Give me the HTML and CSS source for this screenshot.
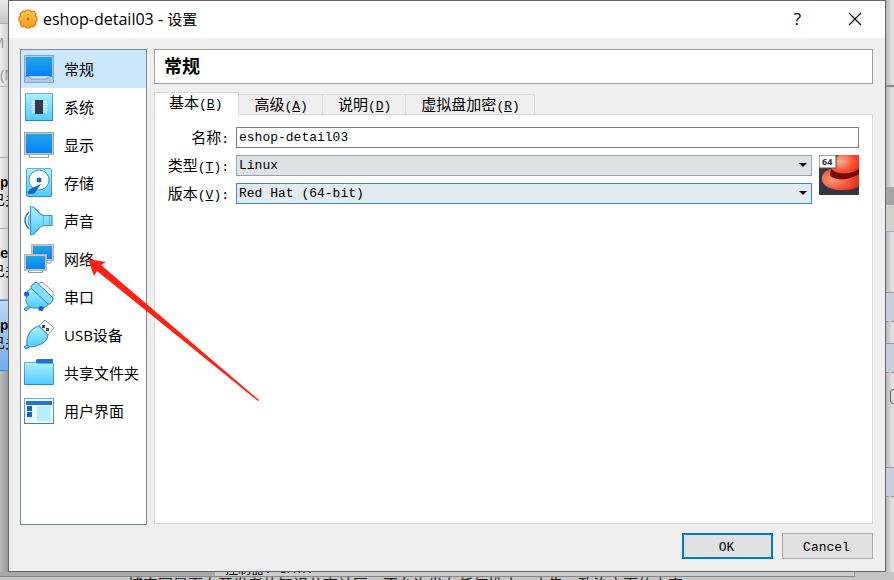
FILE: index.html
```html
<!DOCTYPE html>
<html lang="zh-CN">
<head>
<meta charset="utf-8">
<title>eshop-detail03 - 设置</title>
<link rel="stylesheet" href="styles.css">
</head>
<body>
<svg width="0" height="0" class="defs" aria-hidden="true">
  <defs>
    <linearGradient id="screen" x1="0" y1="0" x2="0" y2="1"><stop offset="0" stop-color="#22a5e4"/><stop offset="1" stop-color="#0580fb"/></linearGradient>
    <linearGradient id="cyan" x1="0" y1="0" x2="0" y2="1"><stop offset="0" stop-color="#aef0ff"/><stop offset="1" stop-color="#50ccff"/></linearGradient>
    <linearGradient id="edge" x1="0" y1="0" x2="0" y2="1"><stop offset="0" stop-color="#5cb2e3"/><stop offset="1" stop-color="#2b86d8"/></linearGradient>
    <linearGradient id="gear" x1="0" y1="0" x2="0" y2="1"><stop offset="0" stop-color="#ffd54a"/><stop offset="1" stop-color="#fb9d20"/></linearGradient>
    <radialGradient id="crown" cx=".35" cy=".3" r=".75"><stop offset="0" stop-color="#ffb594"/><stop offset=".55" stop-color="#fb5a38"/><stop offset="1" stop-color="#ee2a14"/></radialGradient>
    <radialGradient id="brim" cx=".3" cy=".5" r=".7"><stop offset="0" stop-color="#ff9c78"/><stop offset="1" stop-color="#e92d16"/></radialGradient>
  </defs>
</svg>
<div class="desktop">
  <div class="left-strip">
    <div class="toolbar-a"></div>
    <div class="toolbar-b"><span>M</span><span>(M</span></div>
    <div class="vm-gap"></div>
    <div class="vm"><b>p</b><span>已关</span></div>
    <div class="vm"><b>e</b><span>已关</span></div>
    <div class="vm vm-selected"><b>p</b><span>已关</span></div>
    <div class="vm-rest"></div>
  </div>

  <main class="dialog">
    <header class="titlebar">
      <svg class="gear" width="20" height="20" viewBox="0 0 20 20"><path d="M8 1h4l1 2 3-1 2 3-1 2 2 1v4l-2 1 1 2-3 3-2-1-1 2H8l-1-2-3 1-2-3 1-2-2-1V8l2-1-1-2 3-3 2 1z" fill="url(#gear)" stroke="#ee7414" stroke-width="1.200" stroke-linejoin="round"/><circle cx="10" cy="10" r="4.600" fill="none" stroke="#f5a52b"/><circle cx="10" cy="10" r="1.500" fill="#e05c10"/><path d="M10 5v2M10 13v2M5 10h2M13 10h2" stroke="#f5932b"/></svg>
      <h1>eshop-detail03 - <span>设置</span></h1>
      <button class="win-btn" type="button" aria-label="帮助">?</button>
      <button class="win-btn" type="button" aria-label="关闭"><svg width="14" height="14" viewBox="0 0 14 14"><path d="M1 1l12 12M13 1L1 13" stroke="#000" stroke-width="1.100"/></svg></button>
    </header>

    <div class="content">
      <nav class="sidebar">
        <a href="#" class="item active"><svg width="32" height="32" viewBox="0 0 32 32"><path d="M2.500 2.500h29v27h-29z" fill="#a9cbee" stroke="#7ea5ce"/><path d="M4 4h26v19H4z" fill="url(#screen)"/><path d="M3 23.500h4l2 2.500h16l2-2.500h4" fill="#cfe5fb" stroke="#6f9dc9"/></svg><span>常规</span></a>
        <a href="#" class="item"><svg width="32" height="32" viewBox="0 0 32 32"><rect x="3.500" y="2.500" width="27" height="27" fill="url(#cyan)" stroke="url(#edge)"/><path d="M10 11h15M9 13.500h17M10 16h15M9 18.500h17M10 21h15" stroke="#fff" stroke-width="1.200"/><path d="M13 9h8v14h-8z" fill="#343848"/></svg><span>系统</span></a>
        <a href="#" class="item"><svg width="32" height="32" viewBox="0 0 32 32"><path d="M7.500 25h19v3.500h-19z" fill="#fff" stroke="#999"/><rect x="2.500" y="3.500" width="29" height="22" fill="#c6c8c8" stroke="#a4a6a8"/><rect x="4" y="5" width="26" height="19" fill="url(#screen)"/></svg><span>显示</span></a>
        <a href="#" class="item"><svg width="32" height="32" viewBox="0 0 32 32"><rect x="4.500" y="1.500" width="25" height="28" rx="1.500" fill="url(#cyan)" stroke="url(#edge)"/><circle cx="17" cy="13" r="10" fill="#fff" stroke="#3a94da"/><circle cx="17" cy="13" r="2.500" fill="#1467ce"/><path d="M19 17L8 22q-3 3-2 5l4 0q3 0 4-3z" fill="#1467ce"/></svg><span>存储</span></a>
        <a href="#" class="item"><svg width="32" height="32" viewBox="0 0 32 32"><path d="M9 10C5 10 5 21 9 21z" fill="#8be4ff" stroke="#3c9de0"/><path d="M7 7Q-1 15 7 24" fill="none" stroke="#177ccc" stroke-width="1.400"/><path d="M8.500 2Q9 1 11 2C15 4 17 10 22 10.500h8v10h-8C17 21 15 27 11 29.500Q9 30.500 8.500 29z" fill="url(#cyan)" stroke="#3a94da" stroke-width="1.200"/><path d="M21.500 11v9M27.500 11v9" stroke="#55b6e5"/></svg><span>声音</span></a>
        <a href="#" class="item"><svg width="32" height="32" viewBox="0 0 32 32"><path d="M20 17h9v3h-9z" fill="#fff" stroke="#999"/><rect x="9.500" y="1.500" width="22" height="16" fill="#c6c8c8" stroke="#b4b6b8"/><rect x="11" y="3" width="19" height="13" fill="url(#screen)"/><path d="M6.500 27h14v2.500h-14z" fill="#fff" stroke="#999"/><rect x="2.500" y="11.500" width="22" height="16" fill="#c6c8c8" stroke="#b4b6b8"/><rect x="4" y="13" width="19" height="13" fill="url(#screen)"/></svg><span>网络</span></a>
        <a href="#" class="item"><svg width="32" height="32" viewBox="0 0 32 32"><path d="M16 4l2-2.500h3L31 11v5l-3 1z" fill="#fff" stroke="#999"/><path d="M7 24l-5 4 2 2 5-4" fill="#5fc9f5" stroke="#2a7ec6"/><path d="M8 8C4 10 5 14 4 19c0 4 3 8 8 8h6c4 0 7-1 9-5L12 7z" fill="url(#cyan)" stroke="#2b86d8"/><path d="M9 5l4-3.500h2L31 17v2l-3 4h-2L9 7z" fill="#84dfff" stroke="#2b86d8"/><circle cx="4.500" cy="13" r="2.600" fill="#1467ce"/><circle cx="19" cy="27.500" r="2.600" fill="#1467ce"/></svg><span>串口</span></a>
        <a href="#" class="item"><svg width="32" height="32" viewBox="0 0 32 32"><path d="M16 8l7-7 9 8-7 8z" fill="#fff" stroke="#999"/><path d="M20 6h3v3h-3zM24 9h3v3h-3z" fill="#444"/><path d="M6 25l-4 3 2 2 5-3" fill="#5fc9f5" stroke="#2a7ec6"/><path d="M5 26c-1-8 3-17 12-19l9 9c-1 8-11 12-19 12z" fill="url(#cyan)" stroke="#4394d8" stroke-width="1.200"/></svg><span>USB设备</span></a>
        <a href="#" class="item"><svg width="32" height="32" viewBox="0 0 32 32"><path d="M13 6l2-4h16v5H13z" fill="#266fd4"/><path d="M2.500 5.500h11l2 1h16v21h-29z" fill="url(#cyan)" stroke="url(#edge)"/></svg><span>共享文件夹</span></a>
        <a href="#" class="item"><svg width="32" height="32" viewBox="0 0 32 32"><rect x="2.500" y="3.500" width="29" height="25" fill="#f2fcff" stroke="url(#edge)"/><path d="M4 6h26v4H4z" fill="#266fd4"/><path d="M5 11h5v5H5zM5 17h5v5H5z" fill="#1467ce"/><rect x="15" y="11" width="14" height="15" fill="#b9ecfd"/></svg><span>用户界面</span></a>
      </nav>

      <section class="main">
        <h2>常规</h2>
        <div class="tabs" role="tablist">
          <button class="tab selected" type="button" role="tab">基本<span class="key">(<u>B</u>)</span></button>
          <button class="tab" type="button" role="tab">高级<span class="key">(<u>A</u>)</span></button>
          <button class="tab" type="button" role="tab">说明<span class="key">(<u>D</u>)</span></button>
          <button class="tab" type="button" role="tab">虚拟盘加密<span class="key">(<u>R</u>)</span></button>
        </div>
        <form class="pane">
          <label for="name">名称<span class="key">:</span></label>
          <input id="name" class="field name" type="text" value="eshop-detail03">
          <label for="type">类型<span class="key">(<u>T</u>):</span></label>
          <div class="select"><select id="type" class="field"><option>Linux</option></select></div>
          <svg class="os" width="40" height="40" viewBox="0 0 40 40"><rect width="40" height="40" rx="1" fill="#343743"/><path d="M12 14C6 15 2 20 3 25c1 7 12 11 23 10 7 0 11-2 14-4V14z" fill="url(#brim)"/><path d="M12 18C13 10 14 4 20 0h20v18q-16 6-28 0z" fill="url(#crown)"/><path d="M12 14c7 6 18 6 28 0v5c-10 7-25 7-29 1z" fill="#790801"/><rect width="17" height="13" fill="#fff" stroke="#555"/><text x="3" y="10" class="bits">64</text></svg>
          <label for="version">版本<span class="key">(<u>V</u>):</span></label>
          <div class="select"><select id="version" class="field focused"><option>Red Hat (64-bit)</option></select></div>
        </form>
      </section>
    </div>

    <footer class="actions">
      <button class="action default" type="button">OK</button>
      <button class="action" type="button">Cancel</button>
    </footer>
    <svg class="pointer" width="172" height="142" viewBox="0 0 172 142" aria-hidden="true"><path d="M0 0l18 3-5 3 158 135-1 1L9 12l-3 5z" fill="#ff2113"/></svg>
  </main>

  <div class="right-strip">
    <div class="r-top"></div><div class="r-mid"></div><div class="r-scroll"></div><div class="r-bar"></div>
    <div class="r-space"></div><div class="r-cell"></div><div class="r-gap"></div><div class="r-cell"></div>
    <div class="r-check"><i></i></div><div class="r-cell"></div><div class="r-rest"></div>
  </div>
  <div class="bottom-strip">
    <div class="vm-window"><span>控制器: SATA</span></div>
    <div class="page-text"><span>博客园是面向开发者的知识分享社区，不允许发布任何推广、广告、政治方面的内容</span></div>
  </div>
</div>
</body>
</html>
```
FILE: styles.css
```css
* { box-sizing: border-box; }
body { margin: 0; color: #000; font-family: "Open Sans", "Noto Sans CJK SC", sans-serif; font-size: 15px; }
.defs { display: block; }
.desktop {
  display: grid;
  grid-template-columns: 8px minmax(0, 1fr) 8px;
  grid-template-rows: minmax(0, 1fr) 8px;
  height: 100vh;
  overflow: hidden;
  background: #ccc;
}

/* dialog */
.dialog { position: relative; display: flex; flex-direction: column; background: #efefef; border: 1px solid #666; }
.titlebar { display: flex; align-items: center; height: 37px; flex: none; padding: 0 2px 2px 9px; background: #fff; }
.titlebar h1 { flex: 1; margin: 0 0 0 5px; font-size: 16px; font-weight: 400; line-height: 20px; }
.titlebar h1 span { font-size: 15px; }
.win-btn { width: 57px; height: 35px; padding: 0; border: 0; background: none; font: 17px "Open Sans", sans-serif; color: #000; display: grid; place-items: center; }
.content { flex: 1; min-height: 0; display: flex; gap: 7px; padding: 11px 12px 0 11px; }

.sidebar { width: 127px; flex: none; background: #fff; border: 1px solid #7d8896; }
.item { display: flex; align-items: center; gap: 10px; height: 38px; padding-left: 1px; color: #000; text-decoration: none; white-space: nowrap; }
.item svg { flex: none; }
.item span { padding-bottom: 2px; }
.item.active { background: #cce8ff; }

.main { flex: 1; min-width: 0; display: flex; flex-direction: column; padding-bottom: 1px; }
h2 { height: 35px; margin: 0 0 8px; padding-left: 9px; background: #fff; border: 1px solid #a0a0a0; font: bold 18px/35px "Liberation Serif", "Noto Sans CJK SC", serif; }
.tabs { display: flex; align-items: flex-end; height: 23px; margin-bottom: -1px; z-index: 1; }
.tab { height: 21px; padding: 0 14px 0 15px; margin-right: -1px; border: 1px solid #d9d9d9; background: #efefef; color: #000; font: 15px/18px "Noto Sans CJK SC", sans-serif; white-space: nowrap; }
.tab.selected { height: 23px; padding: 0 16px 0 14px; background: #fff; border-bottom-color: #fff; }
.key { font-family: "Liberation Mono", monospace; font-size: 13px; }
.pane {
  flex: 1;
  display: grid;
  grid-template-columns: 62px minmax(0, 1fr) 40px;
  grid-auto-rows: 21px;
  gap: 7px;
  padding: 12px 13px 12px 12px;
  background: #fff;
  border: 1px solid #d9d9d9;
}
.pane label { font: 15px/19px "Noto Sans CJK SC", sans-serif; text-align: right; white-space: nowrap; }
.field { display: block; width: 100%; height: 21px; margin: 0; padding: 0 2px; border: 1px solid #7a7a7a; border-radius: 0; background: #fff; color: #000; font: 13px/19px "Liberation Mono", monospace; appearance: none; outline: 0; }
.name { grid-column: 2 / 4; }
.select { position: relative; grid-column: 2; }
.select .field { background: #e0e2e4; border-color: #98a3ae; }
.select .focused { background: #e2eaf2; border-color: #3c87c7; }
.select::after { content: ""; position: absolute; right: 5px; top: 8px; border: 4px solid transparent; border-top-color: #000; border-bottom: 0; pointer-events: none; }
.os { grid-column: 3; grid-row: 2 / 4; }
.bits { font: bold 9px "Open Sans", sans-serif; fill: #333; }

.actions { flex: none; display: flex; justify-content: flex-end; gap: 9px; padding: 8px 12px 12px; }
.action { width: 91px; height: 26px; padding: 2px 2px 0 0; background: #e1e1e1; border: 1px solid #adadad; color: #000; font: 13px "Liberation Mono", monospace; }
.action.default { border: 2px solid #0078d7; }
.pointer { position: absolute; left: 79px; top: 258px; pointer-events: none; }

/* windows behind the dialog */
.left-strip, .right-strip { display: flex; flex-direction: column; overflow: hidden; background: linear-gradient(90deg, #f0f0f0, #cfcfcf); }
.toolbar-a { height: 24px; flex: none; border-bottom: 1px solid #aaa; background: linear-gradient(#e9e9e9, #c6c6c6); }
.toolbar-b { height: 63px; flex: none; display: flex; flex-direction: column; align-items: flex-start; gap: 12px; padding-top: 8px; border-bottom: 1px solid #bbb; color: #999; line-height: 20px; }
.toolbar-b span:first-child { margin-left: -9px; }
.vm-gap { height: 71px; flex: none; border-bottom: 1px solid #aaa; }
.vm { height: 71px; flex: none; display: flex; flex-direction: column; padding-top: 17px; border-bottom: 1px solid #aaa; font: 14px/16px "Noto Sans CJK SC", sans-serif; white-space: nowrap; }
.vm b { font-family: "Liberation Mono", monospace; }
.vm span { margin-left: -9px; }
.vm-selected { border: solid #338ad8; border-width: 1px 0; background: linear-gradient(#bed7f0, #72adf0); }
.vm-rest { flex: 1; background: linear-gradient(90deg, #bbb, #989898); }

.right-strip { background: linear-gradient(90deg, #b8b8b8, #dfdfdf 6px); }
.right-strip div { flex: none; }
.r-top { height: 87px; border-bottom: 2px solid #888; }
.r-mid { height: 100px; }
.r-scroll { height: 17px; background: #a5a5a5; }
.r-bar { height: 28px; border: solid #aaa; border-width: 1px 0; background: #d0d0cd; }
.r-space { height: 60px; }
.r-cell { height: 30px; border-top: 1px solid #999; border-bottom: 1px dashed #999; background: #c6d0dc; }
.r-gap { height: 21px; }
.r-check { height: 94px; padding: 16px 0 0 4px; }
.r-check i { display: block; width: 12px; height: 15px; border: 1px solid #666; border-radius: 3px; }

.bottom-strip { grid-column: 1 / 4; overflow: hidden; background: #c5c5c5; }
.vm-window { height: 5px; margin-right: 39px; border-bottom: 1px solid #888; border-right: 1px solid #999; overflow: hidden; display: flex; align-items: flex-end; padding-left: 225px; background: linear-gradient(90deg, #a9a9a9 215px, #cecece 215px); font: 13px/12px "Liberation Mono", "Noto Sans CJK SC", monospace; white-space: nowrap; }
.page-text { height: 14px; overflow: hidden; padding-left: 128px; font: 15px/14px "Noto Sans CJK SC", sans-serif; white-space: nowrap; color: #222; }
```
